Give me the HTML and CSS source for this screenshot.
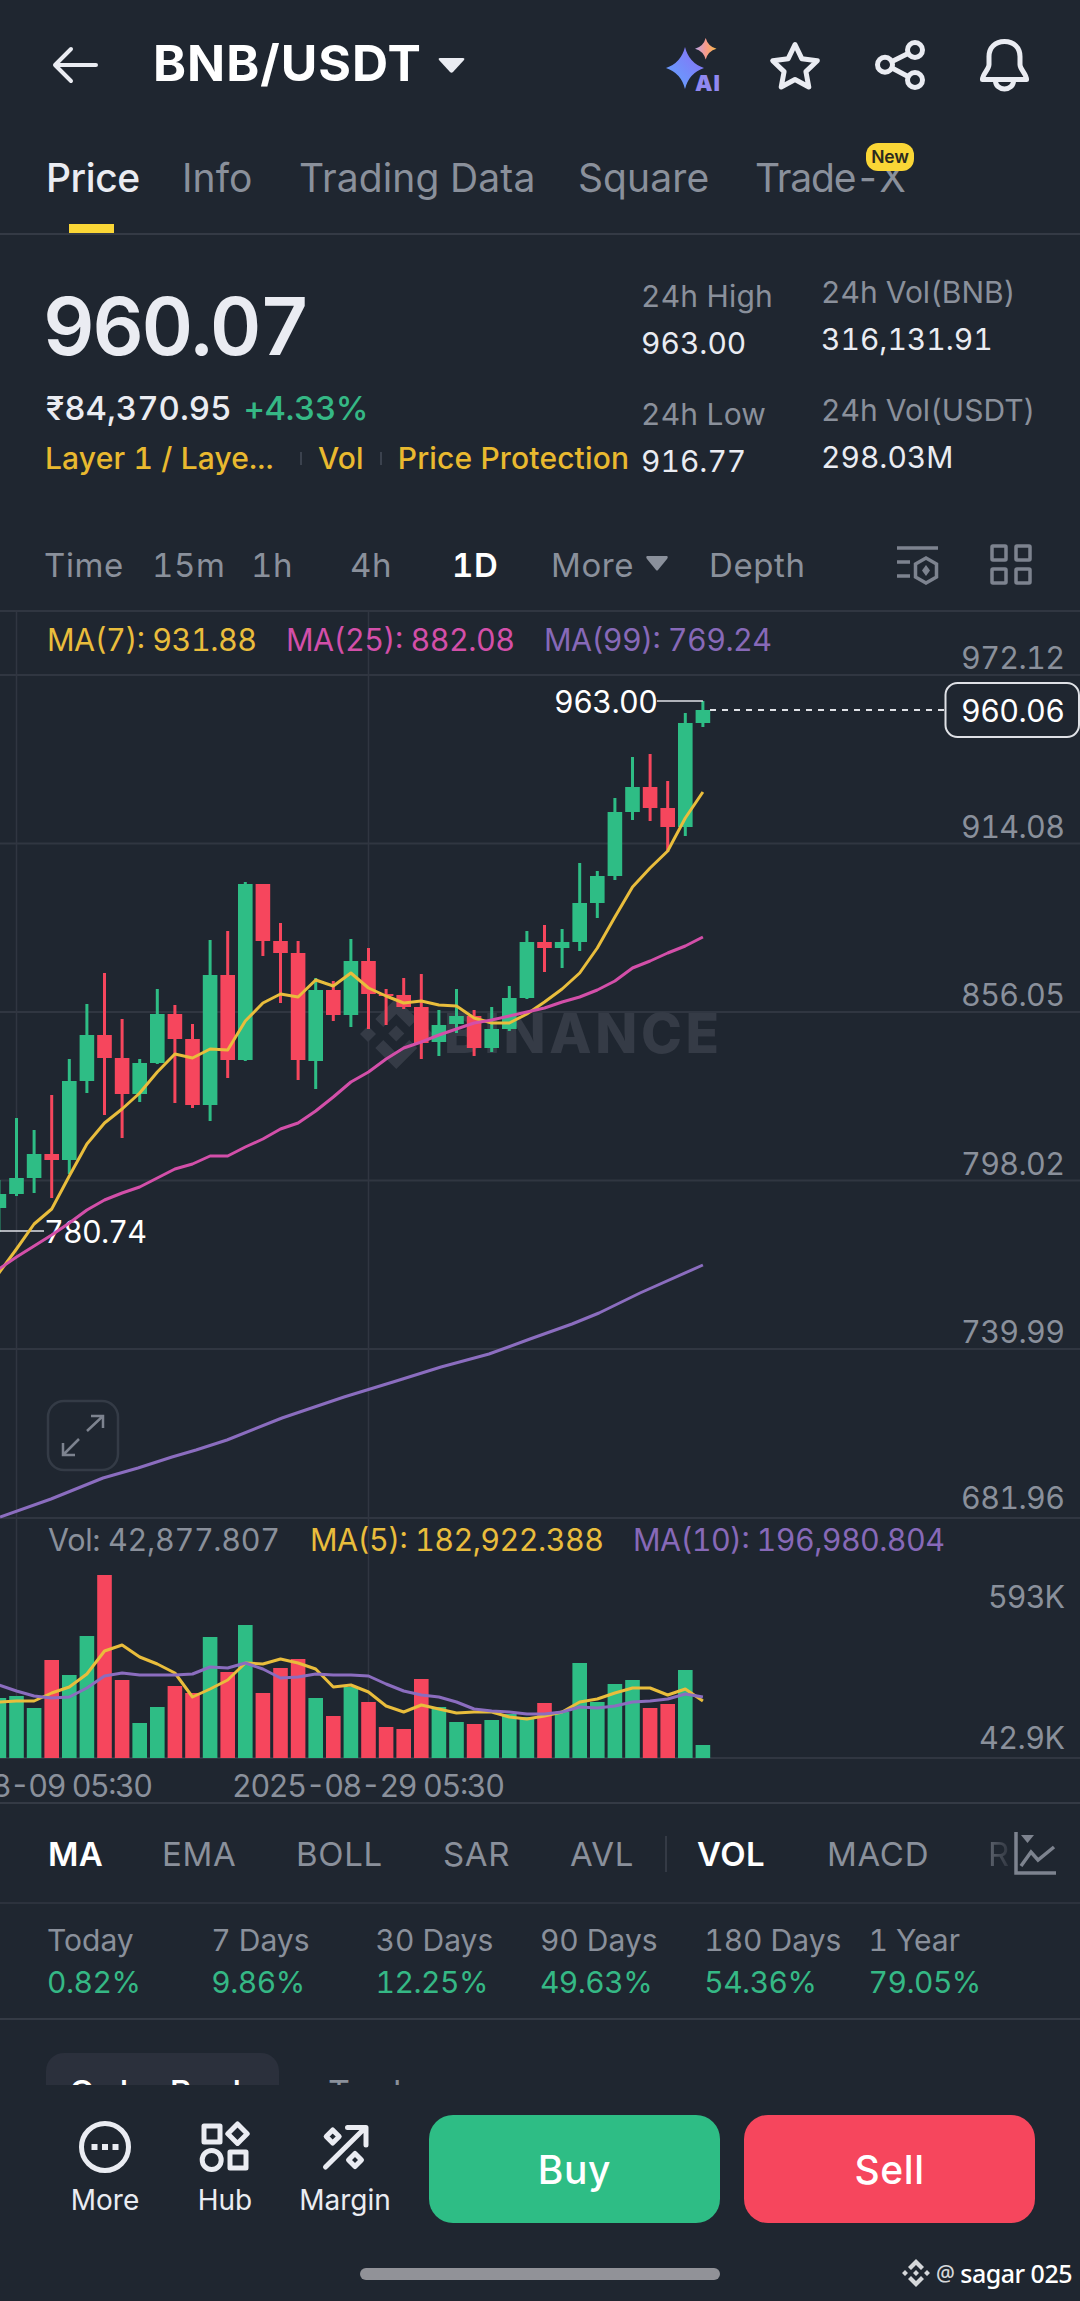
FILE: index.html
```html
<!DOCTYPE html>
<html lang="en">
<head>
    <meta charset="UTF-8">
    <meta name="viewport" content="width=device-width, initial-scale=1.0">
    <title>BNB/USDT</title>
    <link rel="stylesheet" href="styles.css">
</head>
<body>
    <header class="header">
        <svg class="back" width="46" height="38" viewBox="0 0 46 38"><path d="M44 19H3M19 3L3 19l16 16"/></svg>
        <h1>BNB/USDT</h1>
        <svg class="caret" width="27" height="17" viewBox="0 0 27 17"><path d="M2 1h23q2 0 1 2L15 15q-1.500 1.500-3 0L1 3Q0 1 2 1z"/></svg>
        <div class="header-icons">
            <svg width="60" height="60" viewBox="0 0 60 60">
                <defs>
                    <linearGradient id="blue" x1="0" y1="1" x2="1" y2="0">
                        <stop offset="0" stop-color="#5fa8ff"/><stop offset="1" stop-color="#8b6cf5"/>
                    </linearGradient>
                    <linearGradient id="warm" x1="0" y1="0" x2="1" y2="0">
                        <stop offset="0" stop-color="#b9a4e8"/><stop offset=".5" stop-color="#f79a8c"/><stop offset="1" stop-color="#f7b84a"/>
                    </linearGradient>
                </defs>
                <path fill="url(#blue)" d="M23 12Q27 28 42 33Q27 38 23 54Q19 38 4 33Q19 28 23 12z"/>
                <path fill="url(#warm)" d="M43.700 3Q46 11.500 54.500 13.700Q46 16 43.700 24.500Q41.500 16 33 13.700Q41.500 11.500 43.700 3z"/>
                <text class="ai" x="33" y="56" textLength="25">AI</text>
            </svg>
            <svg class="line-icon" width="60" height="60" viewBox="0 0 60 60"><path d="M29 9.500L35.800 23.700L51.300 25.700L39.900 36.600L42.800 52L29 44.500L15.200 52L18.100 36.600L6.700 25.700L22.200 23.700z"/></svg>
            <svg class="line-icon" width="60" height="60" viewBox="0 0 60 60"><circle cx="15" cy="29.700" r="7.500"/><circle cx="45" cy="15" r="7.500"/><circle cx="45" cy="45" r="7.500"/><path d="M22 26.500L38 18.500M22 33L38 41.500"/></svg>
            <svg class="line-icon" width="60" height="60" viewBox="0 0 60 60"><path d="M30.500 6.500C21 6.500 15 13 15 21.500v8C15 34.500 8.500 39 8.500 44.500h44C52.500 39 46 34.500 46 29.500v-8C46 13 40 6.500 30.500 6.500zM21.500 46a9 8 0 0 0 18 0"/></svg>
        </div>
    </header>

    <nav class="tabs">
        <a class="active">Price</a>
        <a>Info</a>
        <a>Trading Data</a>
        <a>Square</a>
        <a class="trade-x">Trade-X<span class="badge">New</span></a>
    </nav>

    <section class="summary">
        <div class="price">
            <div class="last">960.07</div>
            <div class="fiat">₹84,370.95 <span class="up">+4.33%</span></div>
            <div class="tags"><span class="layer">Layer 1 / Laye...</span><i></i><span class="vol">Vol</span><i></i><span>Price Protection</span></div>
        </div>
        <dl class="day">
            <dt>24h High</dt>
            <dd>963.00</dd>
            <dt>24h Low</dt>
            <dd>916.77</dd>
        </dl>
        <dl class="day raised">
            <dt>24h Vol(BNB)</dt>
            <dd>316,131.91</dd>
            <dt>24h Vol(USDT)</dt>
            <dd>298.03M</dd>
        </dl>
    </section>

    <nav class="intervals">
        <a>Time</a>
        <a>15m</a>
        <a>1h</a>
        <a>4h</a>
        <a class="active">1D</a>
        <a>More <svg width="22" height="15" viewBox="0 0 22 15"><path d="M1 0h20q1.500 1 0 3L12 14q-1 1-2 0L1 3Q-.5 1 1 0z"/></svg></a>
        <a>Depth</a>
        <svg class="tool" width="42" height="40" viewBox="0 0 42 40"><path d="M0 3h41M0 17h13M0 31h13M29 13l10.500 6v13L29 38l-10.500-6V19z"/><path class="fill" d="M29 20l4 5.500-4 5.500-4-5.500z"/></svg>
        <svg class="tool" width="42" height="42" viewBox="0 0 42 42"><rect x="2" y="2" width="14" height="14" rx="1"/><rect x="26" y="2" width="14" height="14" rx="1"/><rect x="2" y="25" width="14" height="14" rx="1"/><rect x="26" y="25" width="14" height="14" rx="1"/></svg>
    </nav>

    <svg class="chart" width="1080" height="1192" viewBox="0 0 1080 1192">
        <path class="grid" d="M0 1H1080M0 65H1080M0 233.500H1080M0 402H1080M0 570.500H1080M0 739H1080M0 908H1080M0 1148H1080"/>
        <path class="grid thin" d="M16.500 0V1148M368.500 0V1148"/>

        <g class="watermark">
            <path d="M396.300 388l21 21-8 8-13-13-13 13-8-8zM396.300 459l21-21-8-8-13 13-13-13-8 8zM396.300 415.500l8 8-8 8-8-8zM368 416l8 8-8 8-8-8zM425 416l8 8-8 8-8-8z"/>
            <text x="444" y="443" textLength="275">BINANCE</text>
        </g>

        <g id="bars"></g>
        <g id="candles"></g>

        <path class="pointer" d="M657 91H702.900M0 621H44"/>
        <text class="white" x="554" y="103" textLength="104">963.00</text>
        <text class="white" x="44" y="633" textLength="103">780.74</text>
        <g id="lines"></g>

        <path class="dash" d="M710 100H945"/>
        <rect class="last-box" x="945.500" y="73" width="133.500" height="54" rx="12"/>
        <text class="white" x="961" y="112" textLength="104">960.06</text>

        <text class="yellow" x="47" y="41" textLength="210">MA(7): 931.88</text>
        <text class="pink" x="286" y="41" textLength="229">MA(25): 882.08</text>
        <text class="purple" x="544" y="41" textLength="228">MA(99): 769.24</text>

        <text x="961" y="59" textLength="104">972.12</text>
        <text x="961" y="228" textLength="104">914.08</text>
        <text x="961" y="396" textLength="104">856.05</text>
        <text x="961" y="565" textLength="104">798.02</text>
        <text x="961" y="733" textLength="104">739.99</text>
        <text x="961" y="899" textLength="104">681.96</text>
        <text x="988" y="998" textLength="77">593K</text>
        <text x="979" y="1139" textLength="86">42.9K</text>

        <g class="expand">
            <rect x="48" y="791" width="70" height="69" rx="16"/>
            <path d="M87 821L103 806M91 806h12v12M79 829L63 845M75 845H63V833"/>
        </g>

        <text x="48" y="941" textLength="232">Vol: 42,877.807</text>
        <text class="yellow" x="310" y="941" textLength="294">MA(5): 182,922.388</text>
        <text class="purple" x="633" y="941" textLength="312">MA(10): 196,980.804</text>

        <text x="-118" y="1187" textLength="271">2025-08-09 05:30</text>
        <text x="232" y="1187" textLength="273">2025-08-29 05:30</text>
    </svg>

    <nav class="indicators">
        <a class="active">MA</a>
        <a>EMA</a>
        <a>BOLL</a>
        <a>SAR</a>
        <a>AVL</a>
        <i></i>
        <a class="active">VOL</a>
        <a>MACD</a>
        <a class="faded">R</a>
        <svg class="tool" width="42" height="44" viewBox="0 0 42 44"><path d="M2 0V41H42M7 34l10-14 7 8L40 15"/><path class="fill" d="M7 3h13l-6.500 8z"/></svg>
    </nav>

    <section class="returns">
        <div>Today<b>0.82%</b></div>
        <div>7 Days<b>9.86%</b></div>
        <div>30 Days<b>12.25%</b></div>
        <div>90 Days<b>49.63%</b></div>
        <div>180 Days<b>54.36%</b></div>
        <div>1 Year<b>79.05%</b></div>
    </section>

    <section class="book">
        <a class="active">Order Book</a>
        <a>Trades</a>
    </section>

    <footer class="footer">
        <div class="actions">
            <a class="action"><svg class="line-icon" width="52" height="52" viewBox="0 0 52 52"><circle cx="26" cy="26" r="23.500"/><path class="dots" d="M12.500 23h6v6h-6zM23 23h6v6h-6zM33.500 23h6v6h-6z"/></svg>More</a>
            <a class="action"><svg class="line-icon" width="52" height="52" viewBox="0 0 52 52"><rect x="5" y="5" width="16" height="16"/><path d="M38.500 3l9.700 9.700-9.700 9.700-9.700-9.700z"/><circle cx="12.700" cy="39" r="9.500"/><rect x="31" y="31" width="16" height="16"/></svg>Hub</a>
            <a class="action"><svg class="line-icon" width="52" height="52" viewBox="0 0 52 52"><path d="M6.500 46L46 7M28.500 6.500h18.500V24M13.700 9l6.500 6.500-6.500 6.500-6.500-6.500zM36 32.500l6.500 6.500-6.500 6.500-6.500-6.500z"/></svg>Margin</a>
            <button class="buy">Buy</button>
            <button class="sell">Sell</button>
        </div>
        <div class="home-bar"></div>
        <div class="author">
            <svg width="28" height="28" viewBox="0 0 28 28"><path d="M14 0l8 8-3 3-5-5-5 5-3-3zM14 28l8-8-3-3-5 5-5-5-3 3zM14 11l3 3-3 3-3-3zM3 11l3 3-3 3-3-3zM25 11l3 3-3 3-3-3z"/></svg>
            <span>@</span>sagar 025
        </div>
    </footer>
    <script src="script.js"></script>
</body>
</html>
```
FILE: styles.css
```css
*{
    box-sizing: border-box;
}
body{
    margin: 0;
    width: 1080px;
    background: #1f2630;
    color: #eaecf2;
    font-family: Inter, "Liberation Sans", sans-serif;
    font-variant-numeric: tabular-nums;
    overflow-x: hidden;
}
svg{
    display: block;
    flex: none;
}
.line-icon{
    fill: none;
    stroke: #eaecf2;
    stroke-width: 5;
    stroke-linejoin: round;
    stroke-linecap: round;
}

/* header */
.header{
    display: flex;
    align-items: center;
    height: 130px;
    padding: 0 46px 0 52px;
}
.back{
    fill: none;
    stroke: #eaecf2;
    stroke-width: 4;
    stroke-linecap: round;
    stroke-linejoin: round;
}
h1{
    margin: 0;
    padding: 0 0 4px 55px;
    width: 340px;
    font-size: 50px;
    font-weight: 700;
    line-height: 60px;
    letter-spacing: 1px;
    color: #fff;
    white-space: nowrap;
}
.caret{
    fill: #eaecf2;
}
.header-icons{
    display: flex;
    gap: 44px;
    margin-left: auto;
}
.ai{
    font-size: 22px;
    font-weight: 900;
    fill: #9088f0;
}

/* tabs */
.tabs{
    display: grid;
    grid-template-columns: 136px 117px 279px 177px 1fr;
    height: 105px;
    padding: 23px 0 0 46px;
    border-bottom: 2px solid #343a45;
    font-size: 39px;
    line-height: 50px;
    letter-spacing: .1px;
    color: #8a909b;
}
.tabs a{
    position: relative;
}
.tabs .active{
    color: #eaecf2;
    font-weight: 500;
    letter-spacing: -.4px;
}
.tabs .trade-x{
    letter-spacing: -1.2px;
}
.tabs .active::after{
    content: '';
    position: absolute;
    left: 23px;
    bottom: 0;
    width: 45px;
    height: 9px;
    background: #fad636;
}
.badge{
    position: absolute;
    left: 111px;
    top: -10px;
    width: 48px;
    height: 28px;
    border-radius: 12px;
    background: #fad636;
    color: #2b2a1e;
    font-size: 17.5px;
    font-weight: 600;
    line-height: 28px;
    letter-spacing: -.2px;
    text-align: center;
}

/* price summary */
.summary{
    display: grid;
    grid-template-columns: 595px 180px 1fr;
    height: 286px;
    padding: 41px 0 0 46px;
}
.last{
    margin-left: -3px;
    font-size: 80px;
    font-weight: 600;
    line-height: 100px;
    letter-spacing: -2.5px;
}
.fiat{
    margin-top: 7px;
    font-size: 33px;
    font-weight: 500;
    line-height: 50px;
    letter-spacing: 0;
    white-space: nowrap;
}
.up{
    margin-left: 3px;
    letter-spacing: -.4px;
    color: #35b885;
}
.tags{
    display: flex;
    align-items: center;
    margin: 5px 0 0 -1px;
    font-size: 30px;
    font-weight: 500;
    line-height: 40px;
    letter-spacing: .15px;
    white-space: nowrap;
    color: #e9b92f;
}
.tags i{
    width: 2px;
    height: 13px;
    margin: 0 16px;
    background: #3b424e;
}
.layer{
    width: 239px;
}
.day{
    margin: 0;
    font-size: 30px;
    line-height: 40px;
    letter-spacing: .2px;
    white-space: nowrap;
}
.raised{
    margin-top: -4px;
    letter-spacing: 0;
}
.day dt{
    color: #8a909b;
}
.day dd{
    margin: 7px 0 31px;
    letter-spacing: 0;
}

/* intervals */
.intervals{
    display: grid;
    grid-template-columns: 108px 99px 99px 102px 99px 158px 188px 93px 42px;
    align-items: center;
    height: 89px;
    padding: 0 0 1px 44px;
    font-size: 33px;
    letter-spacing: .6px;
    color: #8a909b;
}
.intervals a{
    display: flex;
    align-items: center;
}
.intervals a svg{
    margin-left: 12px;
    margin-top: -3px;
    fill: #8a909b;
}
.active{
    color: #fff;
    font-weight: 600;
}
.tool{
    fill: none;
    stroke: #7d838f;
    stroke-width: 3.5;
}
.tool .fill{
    fill: #7d838f;
    stroke: none;
}

/* chart */
.chart{
    font-size: 30.5px;
    overflow: hidden;
}
.chart text{
    fill: #8a909b;
}
.chart .yellow{
    fill: #e9bd3c;
}
.chart .pink{
    fill: #d34fa9;
}
.chart .purple{
    fill: #8769b8;
}
.chart .white{
    fill: #fff;
}
.grid{
    fill: none;
    stroke: #303641;
    stroke-width: 2;
}
.thin{
    stroke-width: 1.5;
}
.watermark,
.chart .watermark text{
    fill: #353b46;
}
.watermark text{
    font-size: 55px;
    font-weight: 800;
}
.pointer{
    stroke: #dfe1e6;
    stroke-width: 1.6;
}
.dash{
    stroke: #dfe1e6;
    stroke-width: 2;
    stroke-dasharray: 6 6;
}
.last-box{
    fill: #1f2630;
    stroke: #dfe1e6;
    stroke-width: 2;
}
.expand{
    fill: none;
    stroke: #7d838f;
    stroke-width: 2.5;
}
.expand rect{
    stroke: #343b46;
}
.green{
    fill: #2ebd85;
}
.red{
    fill: #f6465d;
}
.ma{
    fill: none;
    stroke-width: 3;
    stroke-linejoin: round;
}
.ma-yellow{
    stroke: #e9bd3c;
}
.ma-pink{
    stroke: #d34fa9;
}
.ma-purple{
    stroke: #8b6dbf;
}

/* indicators */
.indicators{
    display: grid;
    grid-template-columns: 114px 134px 147px 127px 95px 32px 130px 161px 26px 42px;
    align-items: center;
    height: 102px;
    padding: 2px 0 0 48px;
    border-top: 2px solid #343a45;
    border-bottom: 2px solid #2c323d;
    font-size: 33px;
    letter-spacing: .7px;
    color: #8a909b;
}
.indicators .active{
    letter-spacing: .4px;
}
.indicators i{
    width: 2px;
    height: 36px;
    background: #343a45;
}
.faded{
    color: transparent;
    background: linear-gradient(90deg, #5d636e, #262c36);
    background-clip: text;
    -webkit-background-clip: text;
}

/* returns */
.returns{
    display: grid;
    grid-template-columns: repeat(6, 164.3px);
    height: 116px;
    padding: 15px 0 0 47px;
    border-bottom: 2px solid #343a45;
    font-size: 30px;
    line-height: 42px;
    letter-spacing: 0;
    white-space: nowrap;
    color: #8a909b;
}
.returns b{
    display: block;
    font-weight: 400;
    letter-spacing: -.5px;
    color: #35b885;
}

/* order book, cut by the footer */
.book{
    display: flex;
    height: 65px;
    padding: 33px 0 0 46px;
    overflow: hidden;
    font-size: 34px;
    letter-spacing: .2px;
    color: #8a909b;
}
.book a{
    flex: none;
    height: 76px;
    padding: 0 24px;
    line-height: 79px;
}
.book .active{
    width: 233px;
    margin-right: 25px;
    padding: 0 23px;
    border-radius: 18px;
    background: #2b303c;
    font-weight: 500;
    letter-spacing: -.2px;
    white-space: nowrap;
}

/* footer */
.footer{
    position: relative;
    height: 216px;
    padding: 30px 45px 0;
}
.actions{
    display: grid;
    grid-template-columns: 120px 120px 144px 291px 291px;
    height: 108px;
}
.action{
    display: flex;
    flex-direction: column;
    align-items: center;
    width: 120px;
    padding-top: 6px;
    gap: 9px;
    font-size: 28px;
    line-height: 36px;
    letter-spacing: 0;
}
.dots{
    fill: #eaecf2;
    stroke: none;
}
button{
    border: 0;
    border-radius: 24px;
    color: #fff;
    font-family: inherit;
    font-size: 39px;
    font-weight: 500;
    letter-spacing: .6px;
}
.buy{
    background: #2ebd85;
}
.sell{
    margin-left: 24px;
    width: 291px;
    background: #f6465d;
}
.home-bar{
    width: 360px;
    height: 12px;
    margin: 45px auto 0;
    border-radius: 6px;
    background: #919298;
}
.author{
    position: absolute;
    right: 8px;
    bottom: 10px;
    display: flex;
    align-items: center;
    gap: 6px;
    font-family: "Noto Sans", sans-serif;
    font-size: 25px;
    line-height: 36px;
    font-weight: 500;
    letter-spacing: -.5px;
    color: #fff;
}
.author svg,
.author span{
    fill: #d5d7da;
    color: #d5d7da;
    font-size: 21px;
}
```
FILE: script.js
```js
// [high, open/close top, open/close bottom, low, up, volume top], y in chart pixels
const candles = [
    [570, 584, 598, 622, 1, 1088], [508, 568, 584, 586, 1, 1086], [520, 544, 568, 583, 1, 1098],
    [485, 544, 550, 588, 0, 1050], [449, 471, 550, 564, 1, 1065], [394, 425, 471, 483, 1, 1026],
    [363, 425, 448, 505, 0, 965], [409, 448, 484, 528, 0, 1070], [449, 453, 484, 492, 1, 1113],
    [379, 404, 453, 454, 1, 1097], [395, 404, 429, 493, 0, 1076], [414, 429, 495, 498, 0, 1083],
    [330, 365, 495, 511, 1, 1027], [321, 365, 450, 468, 0, 1062], [272, 274, 450, 451, 1, 1015],
    [274, 274, 331, 346, 0, 1083], [313, 331, 343, 393, 0, 1058], [331, 343, 450, 470, 0, 1049],
    [368, 380, 451, 479, 1, 1088], [371, 380, 405, 411, 0, 1106], [329, 351, 405, 417, 1, 1077],
    [338, 351, 384, 419, 0, 1092], [379, 384, 386, 415, 0, 1117], [368, 385, 397, 399, 0, 1119],
    [364, 397, 433, 449, 0, 1069], [400, 415, 432, 446, 1, 1097], [379, 406, 414, 423, 1, 1112],
    [400, 406, 438, 446, 0, 1114], [397, 419, 438, 442, 1, 1110], [376, 388, 419, 421, 1, 1104],
    [321, 332, 388, 389, 1, 1107], [315, 332, 338, 362, 0, 1093], [319, 332, 338, 358, 1, 1102],
    [253, 293, 332, 341, 1, 1053], [261, 266, 293, 308, 1, 1092], [188, 202, 266, 270, 1, 1074],
    [147, 177, 202, 210, 1, 1070], [144, 177, 198, 211, 0, 1098], [171, 198, 217, 242, 0, 1094],
    [103, 113, 217, 226, 1, 1060], [91, 100, 113, 117, 1, 1135]
];
const ma7 = [663, 639, 614, 599, 566, 534, 513, 499, 483, 462, 444, 448, 439, 440, 411, 393, 384, 387, 370, 376, 363, 378, 386, 393, 391, 395, 396, 408, 413, 413, 404, 392, 379, 363, 338, 307, 277, 258, 241, 208, 182];
const ma25 = [659, 647, 636, 625, 613, 600, 590, 583, 577, 568, 559, 554, 546, 546, 537, 529, 519, 513, 501, 487, 472, 462, 449, 438, 432, 425, 419, 413, 410, 406, 402, 398, 392, 387, 380, 371, 358, 351, 343, 336, 327];
const volMa5 = [1092, 1091, 1091, 1083, 1077, 1064, 1041, 1035, 1047, 1054, 1063, 1087, 1079, 1070, 1053, 1054, 1049, 1053, 1059, 1077, 1075, 1082, 1096, 1102, 1095, 1099, 1103, 1102, 1102, 1107, 1109, 1106, 1102, 1092, 1089, 1083, 1078, 1078, 1085, 1079, 1091];
const volMa10 = [1075, 1081, 1086, 1088, 1087, 1078, 1066, 1063, 1065, 1065, 1065, 1064, 1057, 1058, 1053, 1059, 1068, 1067, 1064, 1065, 1065, 1066, 1074, 1081, 1085, 1087, 1092, 1099, 1101, 1102, 1104, 1104, 1102, 1097, 1098, 1096, 1092, 1091, 1089, 1084, 1087];
const ma99 = [[0, 907], [51, 889], [103, 868], [138, 858], [172, 847], [196, 840], [227, 830], [282, 808], [344, 787], [393, 772], [441, 757], [489, 744], [530, 729], [572, 714], [599, 703], [640, 683], [702.900, 655]];

const step = 17.6;
const centerX = i => -1.1 + i * step;

const rect = (x, y, w, h, cls) => `<rect class="${cls}" x="${x.toFixed(1)}" y="${y}" width="${w}" height="${h}"/>`;
const line = (points, cls) => `<polyline class="ma ${cls}" points="${points.map(p => p.join(',')).join(' ')}"/>`;
const series = values => values.map((y, i) => [centerX(i).toFixed(1), y]);

let bars = '';
let bodies = '';
candles.forEach(([high, top, bottom, low, up, vol], i) => {
    const x = centerX(i);
    const cls = up ? 'green' : 'red';
    bars += rect(x - 7.3, vol, 14.6, 1148 - vol, cls);
    bodies += rect(x - 1.5, high, 3, low - high, cls) + rect(x - 7.3, top, 14.6, bottom - top, cls);
});
document.getElementById('bars').innerHTML = bars;
document.getElementById('candles').innerHTML = bodies;
document.getElementById('lines').innerHTML =
    line(series(ma7), 'ma-yellow') +
    line(series(ma25), 'ma-pink') +
    line(ma99, 'ma-purple') +
    line(series(volMa5), 'ma-yellow') +
    line(series(volMa10), 'ma-purple');
```
